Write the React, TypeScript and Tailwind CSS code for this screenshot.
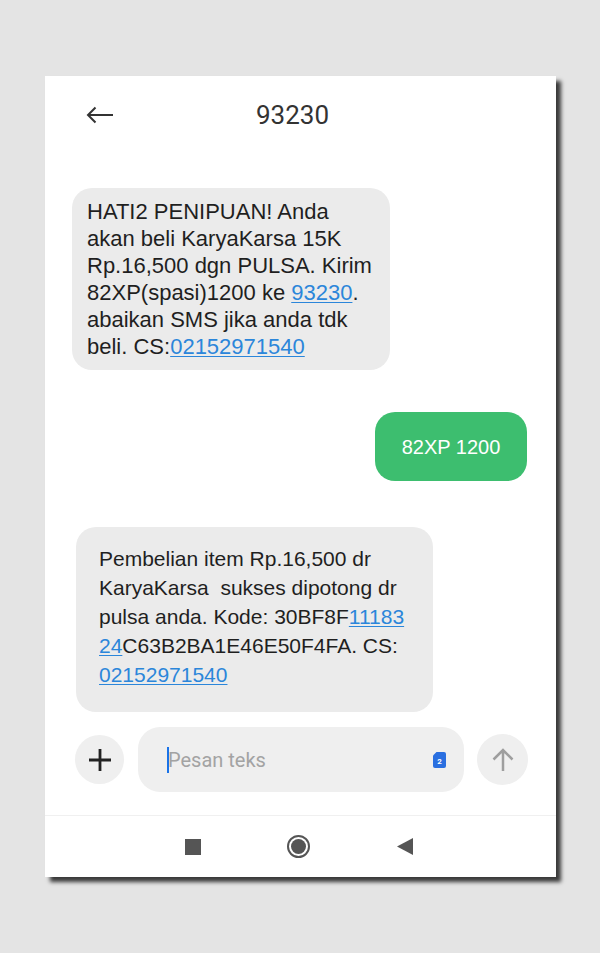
import React from "react";

const sans = { fontFamily: '"Liberation Sans", Arial, sans-serif' };

const Link: React.FC<{ children: React.ReactNode }> = ({ children }) => (
  <span className="text-[#2b86da] underline decoration-1 underline-offset-2">{children}</span>
);

const App: React.FC = () => {
  return (
    <div className="min-h-[953px] w-[600px] bg-[#e4e4e4] pt-[76px] pl-[45px]">
      <div className="flex h-[801px] w-[511px] flex-col bg-white shadow-[5px_5px_4px_rgba(0,0,0,0.75)]">
        {/* Header */}
        <div className="flex h-[78px] items-center pl-[41px]">
          <svg width="28" height="18" viewBox="0 0 28 18" className="text-[#333]">
            <path d="M27 9H2M9.5 1.5 2 9l7.5 7.5" fill="none" stroke="currentColor" strokeWidth="2" />
          </svg>
          <span className="ml-[142px] font-['Roboto'] text-[26px] text-[#333]">93230</span>
        </div>

        {/* Incoming */}
        <div
          style={sans}
          className="ml-[27px] mt-[34px] h-[182px] w-[318px] rounded-[20px] bg-[#ebebeb] px-[15px] pt-[10px] text-[22px] leading-[27px] text-[#1f1f1f]"
        >
          HATI2 PENIPUAN! Anda
          <br />
          akan beli KaryaKarsa 15K
          <br />
          Rp.16,500 dgn PULSA. Kirim
          <br />
          82XP(spasi)1200 ke <Link>93230</Link>.
          <br />
          abaikan SMS jika anda tdk
          <br />
          beli. CS:<Link>02152971540</Link>
        </div>

        {/* Outgoing */}
        <div
          style={sans}
          className="mr-[29px] mt-[42px] flex h-[69px] w-[152px] items-center justify-center self-end rounded-[20px] bg-[#3dbe6f] text-[20px] text-white"
        >
          82XP 1200
        </div>

        {/* Incoming */}
        <div
          style={sans}
          className="ml-[31px] mt-[46px] h-[185px] w-[357px] rounded-[20px] bg-[#ebebeb] pl-[23px] pt-[17px] text-[21px] leading-[29px] text-[#1f1f1f]"
        >
          Pembelian item Rp.16,500 dr
          <br />
          KaryaKarsa&nbsp; sukses dipotong dr
          <br />
          pulsa anda. Kode: 30BF8F<Link>11183</Link>
          <br />
          <Link>24</Link>C63B2BA1E46E50F4FA. CS:
          <br />
          <Link>02152971540</Link>
        </div>

        {/* Compose */}
        <div className="ml-[30px] mt-[15px] flex items-center">
          <div className="flex h-[49px] w-[49px] items-center justify-center rounded-full bg-[#efefef]">
            <svg width="24" height="24" viewBox="0 0 24 24">
              <path d="M12 1v22M1 12h22" stroke="#222" strokeWidth="2.8" />
            </svg>
          </div>
          <div className="ml-[14px] flex h-[65px] w-[326px] items-center rounded-[22px] bg-[#efefef] pl-[29px] pr-[18px]">
            <span className="h-[26px] w-[2px] bg-[#1a73e8]" />
            <span className="ml-[-1px] font-['Roboto'] text-[20px] text-[#a3a3a3]">Pesan teks</span>
            <svg width="13" height="16" viewBox="0 0 13 16" className="ml-auto">
              <path d="M3.5 0H11a2 2 0 0 1 2 2v12a2 2 0 0 1-2 2H2a2 2 0 0 1-2-2V3.5Z" fill="#2a6fe0" />
              <text x="6.5" y="11.5" textAnchor="middle" fontSize="8" fontWeight="700" fill="#fff" fontFamily="Roboto, sans-serif">
                2
              </text>
            </svg>
          </div>
          <div className="ml-[13px] flex h-[51px] w-[51px] items-center justify-center rounded-full bg-[#efefef]">
            <svg width="24" height="24" viewBox="0 0 24 24">
              <path d="M12 23V2M2.5 11.5 12 2l9.5 9.5" fill="none" stroke="#9e9e9e" strokeWidth="2.5" />
            </svg>
          </div>
        </div>

        {/* Nav bar */}
        <div className="mt-[23px] flex flex-1 items-center justify-center gap-[66px] border-t border-[#f0f0f0] pr-[4px]">
          <div className="flex w-[40px] justify-center">
            <div className="h-[16px] w-[16px] bg-[#555]" />
          </div>
          <div className="flex w-[40px] justify-center">
            <div className="flex h-[23px] w-[23px] items-center justify-center rounded-full border-[2px] border-[#555]">
              <div className="h-[15px] w-[15px] rounded-full bg-[#555]" />
            </div>
          </div>
          <div className="flex w-[40px] justify-center">
            <svg width="16" height="17" viewBox="0 0 16 17">
              <path d="M16 0v17L0 8.5Z" fill="#555" />
            </svg>
          </div>
        </div>
      </div>
    </div>
  );
};

export default App;
